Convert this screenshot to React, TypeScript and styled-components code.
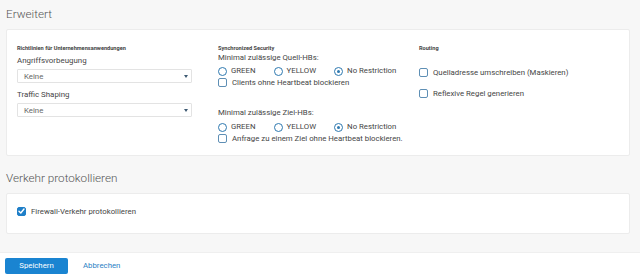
import React from "react";
import styled, { createGlobalStyle } from "styled-components";

const Global = createGlobalStyle`
  html, body { margin: 0; padding: 0; background: #ffffff; }
  body { font-family: Roboto, "Noto Sans", Arial, sans-serif; color: #454545; }
  * { box-sizing: border-box; }
`;

const Page = styled.div`
  width: 640px;
  height: 278px;
  display: flex;
  flex-direction: column;
  overflow: hidden;
`;

const Content = styled.div`
  background: #f7f7f7;
  padding: 0 10px 18px 6px;
  border-bottom: 1px solid #efefef;
`;

const SectionTitle = styled.div<{ $h: number }>`
  height: ${(p) => p.$h}px;
  display: flex;
  align-items: flex-end;
  padding-bottom: 8px;
  font-size: 11.7px;
  font-weight: 300;
  color: #555;
  line-height: 13px;
`;

const Card = styled.div<{ $h: number; $pt: number }>`
  background: #fff;
  border: 1px solid #ececec;
  border-radius: 2px;
  height: ${(p) => p.$h}px;
  padding: ${(p) => p.$pt}px 10px 0 10px;
`;

const Grid = styled.div`
  display: grid;
  grid-template-columns: 201px 201px 1fr;
`;

const Col = styled.div`
  display: flex;
  flex-direction: column;
`;

const GroupTitle = styled.div`
  font-size: 5.6px;
  font-weight: 700;
  line-height: 10px;
  height: 10px;
  color: #444;
`;

const FieldLabel = styled.div<{ $mt: number }>`
  margin-top: ${(p) => p.$mt}px;
  font-size: 7.9px;
  line-height: 12px;
`;

const SubLabel = styled.div<{ $mt: number }>`
  margin-top: ${(p) => p.$mt}px;
  font-size: 7.8px;
  line-height: 10px;
`;

const SelectBox = styled.div`
  margin-top: 2px;
  width: 175px;
  height: 14px;
  border: 1px solid #e3e3e3;
  border-radius: 1px;
  background: #fff;
  display: flex;
  align-items: center;
  justify-content: space-between;
  padding: 0 3px 0 6px;
  font-size: 7.8px;
  color: #666;
`;

const Caret = styled.span`
  width: 0;
  height: 0;
  border-left: 2.5px solid transparent;
  border-right: 2.5px solid transparent;
  border-top: 3px solid #3e5a73;
`;

const RadioRow = styled.div<{ $mt: number }>`
  margin-top: ${(p) => p.$mt}px;
  height: 12px;
  display: flex;
  align-items: center;
  gap: 18px;
`;

const RadioItem = styled.label`
  display: flex;
  align-items: center;
  gap: 4px;
  font-size: 7.8px;
  line-height: 12px;
`;

const RadioCircle = styled.span<{ $on?: boolean }>`
  width: 9px;
  height: 9px;
  border-radius: 50%;
  border: 1.5px solid #2e79b0;
  display: flex;
  align-items: center;
  justify-content: center;
  &::after {
    content: "";
    width: 3px;
    height: 3px;
    border-radius: 50%;
    background: ${(p) => (p.$on ? "#2e79b0" : "transparent")};
  }
`;

const CheckRow = styled.label<{ $mt: number; $h?: number }>`
  margin-top: ${(p) => p.$mt}px;
  height: ${(p) => p.$h ?? 11}px;
  display: flex;
  align-items: center;
  gap: 5px;
  font-size: 7.8px;
`;

const Box = styled.span<{ $on?: boolean }>`
  width: 9px;
  height: 9px;
  border-radius: 2px;
  border: 1px solid ${(p) => (p.$on ? "#1f7fc8" : "#5e8fb5")};
  background: ${(p) => (p.$on ? "#1f7fc8" : "#fff")};
  display: flex;
  align-items: center;
  justify-content: center;
  flex: none;
`;

const Footer = styled.div`
  flex: 1;
  display: flex;
  align-items: center;
  padding: 0 6px 0 5px;
  gap: 15px;
`;

const PrimaryButton = styled.button`
  width: 63px;
  height: 16px;
  border: none;
  border-radius: 2px;
  background: #1a84d1;
  color: #fff;
  font-family: inherit;
  font-size: 7.8px;
  padding: 0;
`;

const LinkButton = styled.span`
  font-size: 7.8px;
  color: #2a7fc4;
`;

const Radio = ({ label, on }: { label: string; on?: boolean }) => (
  <RadioItem>
    <RadioCircle $on={on} />
    {label}
  </RadioItem>
);

const Check = ({ label, on, mt, h }: { label: string; on?: boolean; mt: number; h?: number }) => (
  <CheckRow $mt={mt} $h={h}>
    <Box $on={on}>
      {on && (
        <svg width="7" height="6" viewBox="0 0 7 6">
          <path d="M1 3.2 L2.8 5 L6 1" fill="none" stroke="#fff" strokeWidth="1.4" strokeLinecap="round" strokeLinejoin="round" />
        </svg>
      )}
    </Box>
    {label}
  </CheckRow>
);

export default function App() {
  return (
    <Page>
      <Global />
      <Content>
        <SectionTitle $h={29}>Erweitert</SectionTitle>
        <Card $h={127} $pt={13}>
          <Grid>
            <Col>
              <GroupTitle>Richtlinien für Unternehmensanwendungen</GroupTitle>
              <FieldLabel $mt={2}>Angriffsvorbeugung</FieldLabel>
              <SelectBox>
                Keine
                <Caret />
              </SelectBox>
              <FieldLabel $mt={6}>Traffic Shaping</FieldLabel>
              <SelectBox>
                Keine
                <Caret />
              </SelectBox>
            </Col>
            <Col>
              <GroupTitle>Synchronized Security</GroupTitle>
              <SubLabel $mt={0}>Minimal zulässige Quell-HBs:</SubLabel>
              <RadioRow $mt={2}>
                <Radio label="GREEN" />
                <Radio label="YELLOW" />
                <Radio label="No Restriction" on />
              </RadioRow>
              <Check mt={0} label="Clients ohne Heartbeat blockieren" />
              <SubLabel $mt={20}>Minimal zulässige Ziel-HBs:</SubLabel>
              <RadioRow $mt={3}>
                <Radio label="GREEN" />
                <Radio label="YELLOW" />
                <Radio label="No Restriction" on />
              </RadioRow>
              <Check mt={0} label="Anfrage zu einem Ziel ohne Heartbeat blockieren." />
            </Col>
            <Col>
              <GroupTitle>Routing</GroupTitle>
              <Check mt={13} h={12} label="Quelladresse umschreiben (Maskieren)" />
              <Check mt={9} h={12} label="Reflexive Regel generieren" />
            </Col>
          </Grid>
        </Card>
        <SectionTitle $h={37}>Verkehr protokollieren</SectionTitle>
        <Card $h={41} $pt={11}>
          <Check mt={0} h={12} on label="Firewall-Verkehr protokollieren" />
        </Card>
      </Content>
      <Footer>
        <PrimaryButton>Speichern</PrimaryButton>
        <LinkButton>Abbrechen</LinkButton>
      </Footer>
    </Page>
  );
}
